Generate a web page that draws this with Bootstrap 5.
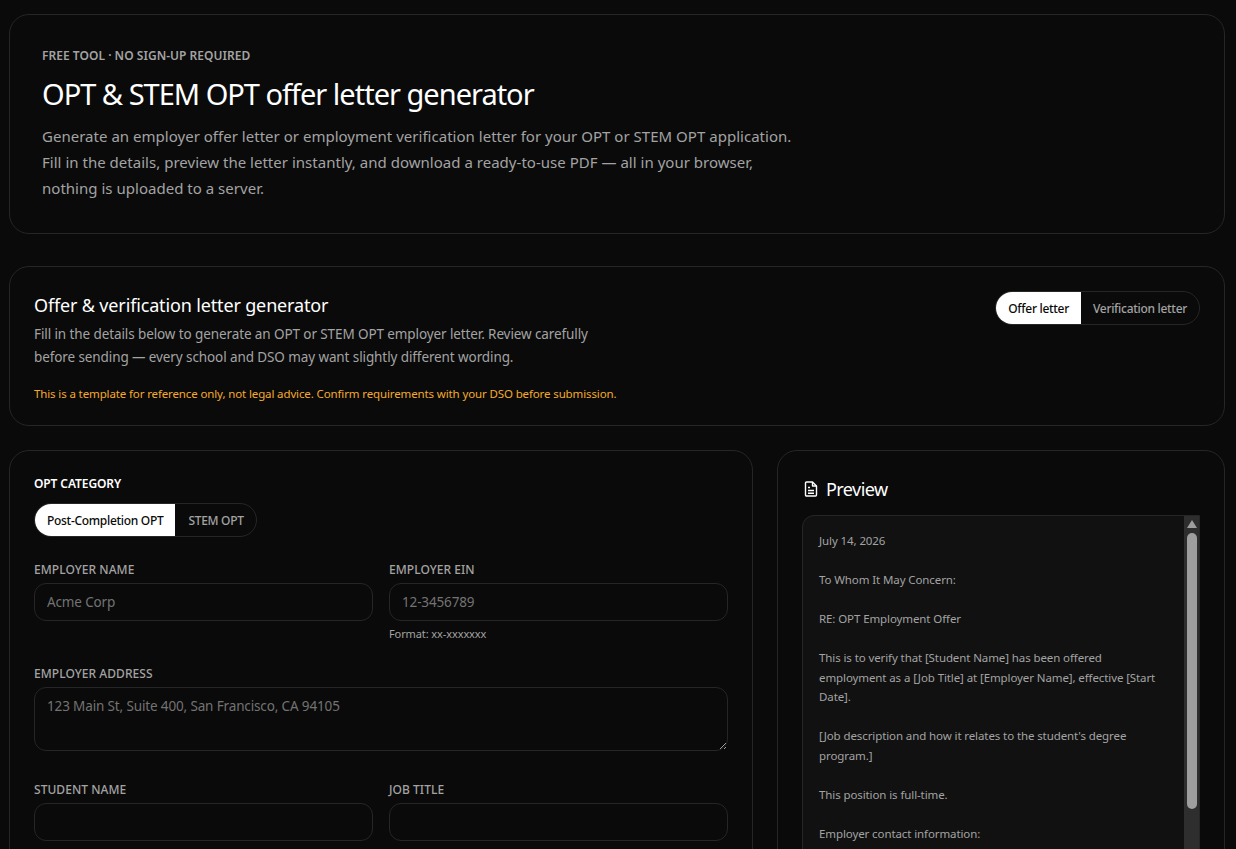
<!DOCTYPE html>
<html lang="en" data-bs-theme="dark">
<head>
<meta charset="utf-8">
<title>OPT offer letter generator</title>
<link href="https://cdn.jsdelivr.net/npm/bootstrap@5.3.0/dist/css/bootstrap.min.css" rel="stylesheet">
<style>
html,body{height:100%;overflow:hidden}
body{background:#0a0a0a;color:#a3a3a3;font-family:"Noto Sans","Open Sans",sans-serif}
.pg{padding:14px 11px 40px 9px;display:flex;flex-direction:column}
.pane{background:#0a0a0a;border:1px solid #262626;border-radius:20px;color:#a3a3a3}
.hero{padding:32px;height:220px;margin-bottom:32px}
.hero .eyebrow{font-size:12px;font-weight:600;line-height:16px;margin:1px 0 11px;letter-spacing:.03px;color:#a3a3a3;max-width:none}
.hero h1{font-size:29px;font-weight:400;line-height:40px;letter-spacing:-1px;color:#fff;margin:-1px 0 9px}
.hero p{font-size:15px;line-height:26px;max-width:768px;margin:0;letter-spacing:.02px}
.intro{padding:24px;height:160px;margin-bottom:24px}
.intro h2{font-size:18px;font-weight:400;line-height:28px;letter-spacing:-.15px;color:#fff;margin:0 0 4px}
.intro p{font-size:13.5px;line-height:23px;max-width:576px;margin:0;letter-spacing:-.1px}
.intro .warn{font-size:11.5px;line-height:18px;color:#f5ab2a;margin-top:16px;max-width:none;letter-spacing:-.125px}
.sw{display:inline-flex;border:1px solid #262626;border-radius:17px;height:34px;overflow:hidden;background:#0a0a0a}
.sw .btn{border:0;border-radius:0;font-size:12px;font-weight:500;line-height:18px;padding:8px 12px 6px;color:#a3a3a3;letter-spacing:-.3px;background:transparent}
.sw .btn.on{background:#fff;color:#0a0a0a}
.sw .btn.wide{padding-left:13px}
.cols{display:grid;grid-template-columns:744px 448px;gap:24px}
.fpane{padding:24px}
.cap{font-size:12px;font-weight:600;line-height:16px;color:#fff;text-transform:uppercase;margin:1px 0 11px;letter-spacing:-.1px}
.fld{font-size:12px;font-weight:500;line-height:16px;text-transform:uppercase;padding-top:1px;margin:0 0 5px;color:#a3a3a3;letter-spacing:.05px;display:block}
.form-control.inp{background:#0a0a0a;border:1px solid #262626;border-radius:12px;height:38px;font-size:13.5px;padding:8px 12px;color:#e5e5e5;letter-spacing:-.14px}
textarea.form-control.inp{height:64px;min-height:64px}
.inp::placeholder{color:#737373;opacity:1}
.hint{font-size:11px;line-height:16px;margin-top:5px;color:#a3a3a3;letter-spacing:-.1px}
.frow{display:grid;grid-template-columns:minmax(0,1fr) minmax(0,1fr);gap:16px}
.gap-a{margin-bottom:24px}
.gap-b{margin-bottom:23px}
.gap-c{margin-bottom:30px}
.h-prev{font-size:18px;font-weight:400;line-height:28px;color:#fff;margin:0 0 12px;display:flex;align-items:center;gap:8px;letter-spacing:-.55px;padding-left:2px}
.prev-wrap{display:flex;height:520px;background:#111;border:1px solid #262626;border-radius:12px 0 0 12px;overflow:hidden}
.prev-box{flex:1 1 0;min-width:0;overflow:hidden;padding:15px 16px 16px;font-size:11.5px;line-height:19.5px;white-space:pre-wrap;color:#a3a3a3;letter-spacing:-.1px;margin:0;font-family:inherit;background:transparent}
.sbar{flex:0 0 15px;background:#2e2e2e;display:flex;flex-direction:column;align-items:center;padding-top:4px}
.sbar svg{display:block}
.sthumb{width:10px;height:276px;background:#9e9e9e;border-radius:5px;margin-top:5px}
</style>
</head>
<body>
<div class="pg">
  <section class="pane hero">
    <p class="eyebrow">FREE TOOL · NO SIGN-UP REQUIRED</p>
    <h1>OPT &amp; STEM OPT offer letter generator</h1>
    <p>Generate an employer offer letter or employment verification letter for your OPT or STEM OPT application. Fill in the details, preview the letter instantly, and download a ready-to-use PDF — all in your browser, nothing is uploaded to a server.</p>
  </section>
  <section class="pane intro d-flex justify-content-between align-items-start">
    <div>
      <h2>Offer &amp; verification letter generator</h2>
      <p>Fill in the details below to generate an OPT or STEM OPT employer letter. Review carefully before sending — every school and DSO may want slightly different wording.</p>
      <p class="warn">This is a template for reference only, not legal advice. Confirm requirements with your DSO before submission.</p>
    </div>
    <div class="sw" role="group">
      <button type="button" class="btn on">Offer letter</button>
      <button type="button" class="btn">Verification letter</button>
    </div>
  </section>
  <div class="cols">
    <section class="pane fpane">
      <p class="cap">OPT category</p>
      <div class="sw gap-a" role="group">
        <button type="button" class="btn on">Post-Completion OPT</button>
        <button type="button" class="btn wide">STEM OPT</button>
      </div>
      <div class="frow gap-b">
        <div><label class="fld">Employer name</label><input class="form-control inp" placeholder="Acme Corp"></div>
        <div><label class="fld">Employer EIN</label><input class="form-control inp" placeholder="12-3456789"><div class="hint">Format: xx-xxxxxxx</div></div>
      </div>
      <div class="gap-c"><label class="fld">Employer address</label><textarea class="form-control inp" placeholder="123 Main St, Suite 400, San Francisco, CA 94105"></textarea></div>
      <div class="frow">
        <div><label class="fld">Student name</label><input class="form-control inp"></div>
        <div><label class="fld">Job title</label><input class="form-control inp"></div>
      </div>
    </section>
    <section class="pane fpane">
      <h3 class="h-prev"><svg width="14" height="16" viewBox="0 0 14 16" fill="none" stroke="#fff" stroke-width="1.4" stroke-linejoin="round"><path d="M2.5 1h6L12.5 5v9a1 1 0 0 1-1 1h-9a1 1 0 0 1-1-1V2a1 1 0 0 1 1-1z"/><path d="M8.5 1v4h4M4 6.5h2M4 9.5h6M4 12.3h6"/></svg>Preview</h3>
      <div class="prev-wrap">
        <pre class="prev-box">July 14, 2026

To Whom It May Concern:

RE: OPT Employment Offer

This is to verify that [Student Name] has been offered employment as a [Job Title] at [Employer Name], effective [Start Date].

[Job description and how it relates to the student's degree program.]

This position is full-time.

Employer contact information:</pre>
        <div class="sbar" aria-hidden="true">
          <svg width="10" height="8" viewBox="0 0 10 8"><path d="M5 0L10 8H0z" fill="#9e9e9e"/></svg>
          <div class="sthumb"></div>
        </div>
      </div>
    </section>
  </div>
</div>
<script src="https://cdn.jsdelivr.net/npm/bootstrap@5.3.0/dist/js/bootstrap.bundle.min.js"></script>
</body>
</html>
